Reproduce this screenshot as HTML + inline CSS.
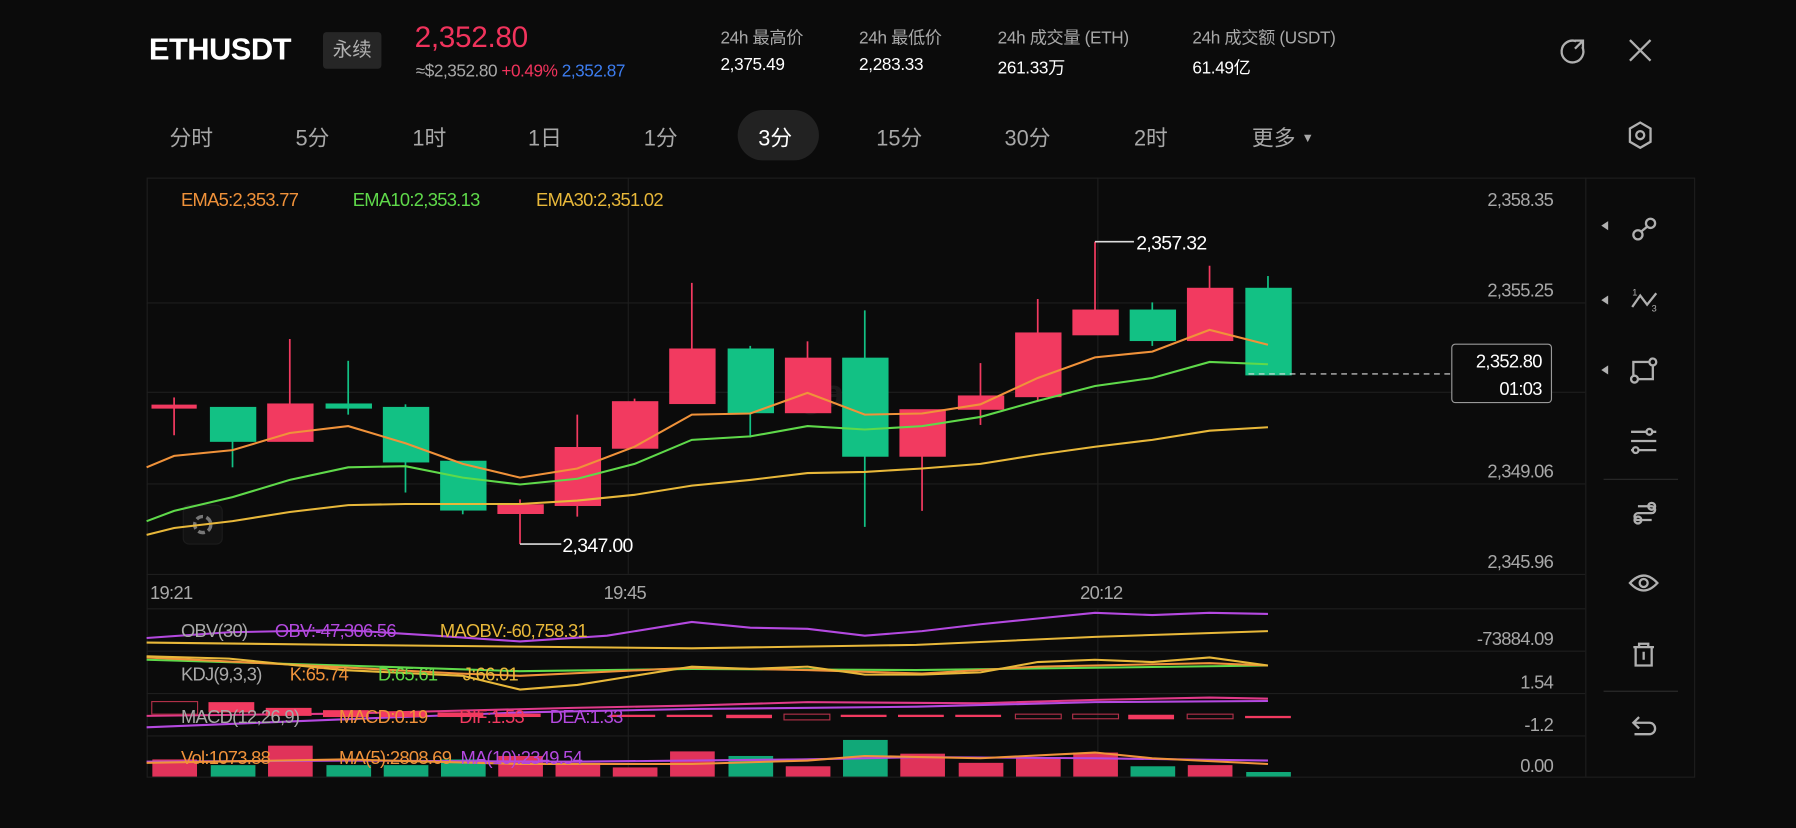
<!DOCTYPE html>
<html><head><meta charset="utf-8"><style>
html,body{margin:0;padding:0;background:#0b0b0b;width:1796px;height:828px;overflow:hidden}
#w{position:absolute;left:0;top:0;width:1568px;height:723px;transform:scale(1.14541);transform-origin:0 0;font-family:"Liberation Sans","Noto Sans CJK SC",sans-serif;color:#fff}
.a{position:absolute;white-space:nowrap}
.lb{color:#a8a8a8;font-size:15px;letter-spacing:-0.3px}
.v{color:#fff;font-size:15px;letter-spacing:-0.3px}
.tab{position:absolute;top:106px;font-size:19px;color:#a8a8a8}
svg text{font-family:"Liberation Sans","Noto Sans CJK SC",sans-serif;letter-spacing:-0.6px}
</style></head><body><div id="w">
<div class="a" style="left:130px;top:28px;font-size:27px;font-weight:bold;letter-spacing:-0.5px">ETHUSDT</div>
<div class="a" style="left:282px;top:28px;width:51px;height:32px;background:#262626;border-radius:3px;color:#b0b0b0;font-size:17px;line-height:32px;text-align:center">永续</div>
<div class="a" style="left:362px;top:17px;font-size:26px;color:#f0335c;letter-spacing:-0.3px">2,352.80</div>
<div class="a" style="left:363px;top:54px;font-size:15px;color:#a8a8a8;letter-spacing:-0.4px">≈$2,352.80 <span style="color:#f0335c">+0.49%</span> <span style="color:#3d7df0">2,352.87</span></div>
<div class="a lb" style="left:629px;top:22px">24h 最高价</div><div class="a v" style="left:629px;top:48px">2,375.49</div>
<div class="a lb" style="left:750px;top:22px">24h 最低价</div><div class="a v" style="left:750px;top:48px">2,283.33</div>
<div class="a lb" style="left:871px;top:22px">24h 成交量 (ETH)</div><div class="a v" style="left:871px;top:48px">261.33万</div>
<div class="a lb" style="left:1041px;top:22px">24h 成交额 (USDT)</div><div class="a v" style="left:1041px;top:48px">61.49亿</div>
<svg class="a" style="left:1360px;top:32px" width="90" height="26" viewBox="0 0 90 26"><path d="M16 4 A9.5 9.5 0 1 0 21.5 9" fill="none" stroke="#b0b0b0" stroke-width="2"/><path d="M15 3.5 L22 3.5 L22 10.5 M22 3.5 L15 10.5" fill="none" stroke="#b0b0b0" stroke-width="2"/><path d="M63 3 L81 21 M81 3 L63 21" stroke="#b0b0b0" stroke-width="2"/></svg>
<div class="a" style="left:644px;top:96px;width:71px;height:44px;border-radius:22px;background:#222"></div>
<div class="tab" style="left:148px">分时</div><div class="tab" style="left:258px">5分</div><div class="tab" style="left:360px">1时</div><div class="tab" style="left:461px">1日</div><div class="tab" style="left:562px">1分</div><div class="tab" style="left:662px;color:#fff">3分</div><div class="tab" style="left:765px">15分</div><div class="tab" style="left:877px">30分</div><div class="tab" style="left:990px">2时</div><div class="tab" style="left:1093px">更多 <span style="font-size:11px;position:relative;top:-3px">▼</span></div>
<svg class="a" style="left:1420px;top:105px" width="24" height="26" viewBox="0 0 24 26"><path d="M12 2 L21 7.2 L21 18.8 L12 24 L3 18.8 L3 7.2 Z" fill="none" stroke="#b0b0b0" stroke-width="2"/><circle cx="12" cy="13" r="3.5" fill="none" stroke="#b0b0b0" stroke-width="2"/></svg>

<svg class="a" style="left:0;top:0" width="1568" height="723" viewBox="0 0 1568 723">
<g stroke="#1e1e1e" stroke-width="1" fill="none">
<rect x="128.5" y="155.5" width="1351" height="523"/>
<line x1="1384.5" y1="155" x2="1384.5" y2="678"/>
<line x1="128" y1="264.5" x2="1384" y2="264.5"/><line x1="128" y1="342.5" x2="1384" y2="342.5"/><line x1="128" y1="422.5" x2="1384" y2="422.5"/><line x1="128" y1="501.5" x2="1384" y2="501.5"/>
<line x1="128" y1="531.5" x2="1384" y2="531.5"/><line x1="128" y1="568.5" x2="1384" y2="568.5"/><line x1="128" y1="605.5" x2="1384" y2="605.5"/><line x1="128" y1="642.5" x2="1384" y2="642.5"/>
<line x1="548.5" y1="155" x2="548.5" y2="501"/><line x1="958.5" y1="155" x2="958.5" y2="501"/>
<line x1="548.5" y1="531" x2="548.5" y2="678"/><line x1="958.5" y1="531" x2="958.5" y2="678"/>
<line x1="1400" y1="418.5" x2="1465" y2="418.5" stroke="#2a2a2a"/><line x1="1400" y1="603.5" x2="1465" y2="603.5" stroke="#2a2a2a"/>
</g>
<g font-size="16" fill="#a8a8a8" text-anchor="end">
<text x="1356" y="180">2,358.35</text><text x="1356" y="259">2,355.25</text><text x="1356" y="417">2,349.06</text><text x="1356" y="496">2,345.96</text>
<text x="1356" y="563">-73884.09</text><text x="1356" y="601">1.54</text><text x="1356" y="638">-1.2</text><text x="1356" y="674">0.00</text>
</g>
<g font-size="16" fill="#a8a8a8"><text x="131" y="523">19:21</text><text x="527" y="523">19:45</text><text x="943" y="523">20:12</text></g>
<g font-size="16"><text x="158" y="180" fill="#f0923a">EMA5:2,353.77</text><text x="308" y="180" fill="#5fd94a">EMA10:2,353.13</text><text x="468" y="180" fill="#e8b83a">EMA30:2,351.02</text></g>
<text x="698" y="355" font-size="34" font-weight="bold" fill="#1a1a1a">gate</text>
<rect x="160" y="441" width="34" height="34" rx="5" fill="#121212" stroke="#1c1c1c"/><circle cx="177" cy="458" r="7" fill="none" stroke="#777" stroke-width="3" stroke-dasharray="6 3"/>
<g stroke-width="1.5">
<g stroke="#f23a60" fill="#f23a60">
<line x1="152" y1="347" x2="152" y2="380"/><rect x="133" y="354" width="38" height="2"/>
<line x1="253" y1="296" x2="253" y2="385"/><rect x="234" y="353" width="39" height="32"/>
<line x1="454" y1="436" x2="454" y2="475"/><rect x="435" y="441" width="39" height="7"/>
<line x1="504" y1="362" x2="504" y2="451"/><rect x="485" y="391" width="39" height="50"/>
<line x1="554" y1="348" x2="554" y2="391"/><rect x="535" y="351" width="39" height="40"/>
<line x1="604" y1="247" x2="604" y2="352"/><rect x="585" y="305" width="39" height="47"/>
<line x1="705" y1="298" x2="705" y2="360"/><rect x="686" y="313" width="39" height="47"/>
<line x1="805" y1="358" x2="805" y2="446"/><rect x="786" y="358" width="39" height="40"/>
<line x1="856" y1="317" x2="856" y2="371"/><rect x="837" y="346" width="39" height="11"/>
<line x1="906" y1="261" x2="906" y2="350"/><rect x="887" y="291" width="39" height="55"/>
<line x1="956" y1="211" x2="956" y2="292"/><rect x="937" y="271" width="39" height="21"/>
<line x1="1056" y1="232" x2="1056" y2="297"/><rect x="1037" y="252" width="39" height="45"/>
</g>
<g stroke="#12c184" fill="#12c184">
<line x1="203" y1="356" x2="203" y2="408"/><rect x="184" y="356" width="39" height="29"/>
<line x1="304" y1="315" x2="304" y2="362"/><rect x="285" y="353" width="39" height="3"/>
<line x1="354" y1="353" x2="354" y2="430"/><rect x="335" y="356" width="39" height="47"/>
<line x1="404" y1="403" x2="404" y2="449"/><rect x="385" y="403" width="39" height="42"/>
<line x1="655" y1="302" x2="655" y2="382"/><rect x="636" y="305" width="39" height="55"/>
<line x1="755" y1="271" x2="755" y2="460"/><rect x="736" y="313" width="39" height="85"/>
<line x1="1006" y1="264" x2="1006" y2="302"/><rect x="987" y="271" width="39" height="26"/>
<line x1="1107" y1="241" x2="1107" y2="327"/><rect x="1088" y="252" width="39" height="75"/>
</g></g>
<g fill="none" stroke-width="1.8">
<polyline stroke="#e8b83a" points="128,467 152,461 203,455 253,447 304,441 354,440 404,440 454,440 504,437 554,432 604,424 655,419 705,413 755,412 805,409 856,405 906,397 956,390 1006,384 1056,376 1107,373"/>
<polyline stroke="#5fd94a" points="128,455 152,446 203,434 253,419 304,408 354,407 404,417 454,423 504,418 554,405 604,384 655,381 705,372 755,375 805,372 856,364 906,350 956,337 1006,330 1056,316 1107,318"/>
<polyline stroke="#f0923a" points="128,408 152,398 203,393 253,378 304,372 354,387 404,405 454,417 504,409 554,390 604,362 655,361 705,343 755,362 805,361 856,353 906,330 956,312 1006,307 1056,288 1107,301"/>
</g>
<polyline points="454,475 490,475" stroke="#ddd" stroke-width="1.5" fill="none"/><text x="491" y="482" font-size="17" fill="#fff">2,347.00</text>
<polyline points="956,211 990,211" stroke="#ddd" stroke-width="1.5" fill="none"/><text x="992" y="218" font-size="17" fill="#fff">2,357.32</text>
<line x1="1090" y1="326.5" x2="1267" y2="326.5" stroke="#ddd" stroke-dasharray="5 4"/>
<text x="1352" y="338" font-size="16" fill="#2a2a2a" text-anchor="end">2,352.16</text>
<rect x="1267.5" y="300.5" width="87" height="51" rx="3" fill="#0b0b0b" stroke="#999"/>
<text x="1346" y="321" font-size="16" fill="#fff" text-anchor="end">2,352.80</text><text x="1346" y="345" font-size="16" fill="#fff" text-anchor="end">01:03</text>
<g fill="none" stroke-width="1.8">
<polyline stroke="#b449e0" points="128,557 200,552 300,550 380,555 454,560 530,555 604,543 655,548 705,549 755,555 805,551 856,545 906,540 956,535 1006,537 1056,535 1107,536"/>
<polyline stroke="#e8b83a" points="128,561 300,563 604,566 800,563 956,556 1107,551"/>
<polyline stroke="#5fd94a" points="128,576 300,581 454,586 604,584 800,585 1107,581"/>
<polyline stroke="#f0923a" points="128,574 250,580 400,588 454,590 604,583 705,585 805,588 906,582 1056,579 1107,581"/>
<polyline stroke="#e8b83a" points="128,573 200,575 300,585 404,590 454,602 504,598 554,590 604,582 655,584 705,582 755,589 805,589 856,587 906,578 956,576 1006,578 1056,574 1107,581"/>
<polyline stroke="#e03a8a" points="128,625 300,623 500,618 604,616 705,613 856,614 956,611 1056,609 1107,610"/>
<polyline stroke="#b449e0" points="128,635 300,628 454,622 604,619 800,617 956,613 1107,612"/>
</g>
<g fill="#f23a60">
<rect x="182" y="613" width="40" height="9" /><rect x="232" y="618" width="40" height="7"/><rect x="282" y="620" width="40" height="6"/><rect x="332" y="621" width="40" height="5"/><rect x="382" y="622" width="40" height="4"/><rect x="432" y="623" width="40" height="3"/>
<rect x="532" y="624" width="40" height="2"/><rect x="582" y="624" width="40" height="2"/><rect x="634" y="624" width="40" height="3"/><rect x="734" y="624" width="40" height="2"/><rect x="784" y="624" width="40" height="2"/><rect x="834" y="624" width="40" height="2"/><rect x="985" y="624" width="40" height="4"/><rect x="1087" y="625" width="40" height="2"/>
</g>
<g fill="none" stroke="#b03048" stroke-width="1"><rect x="132.5" y="612.5" width="40" height="11"/><rect x="684.5" y="623.5" width="40" height="5"/><rect x="886.5" y="623.5" width="40" height="4"/><rect x="936.5" y="623.5" width="40" height="4"/><rect x="1036.5" y="623.5" width="40" height="4"/></g>
<g fill="#e0335a"><rect x="133" y="663" width="39" height="15"/><rect x="234" y="651" width="39" height="27"/><rect x="435" y="660" width="39" height="18"/><rect x="485" y="666" width="39" height="12"/><rect x="535" y="670" width="39" height="8"/><rect x="585" y="656" width="39" height="22"/><rect x="686" y="669" width="39" height="9"/><rect x="786" y="658" width="39" height="20"/><rect x="837" y="666" width="39" height="12"/><rect x="887" y="661" width="39" height="17"/><rect x="937" y="657" width="39" height="21"/><rect x="1037" y="668" width="39" height="10"/></g>
<g fill="#11a878"><rect x="184" y="668" width="39" height="10"/><rect x="285" y="668" width="39" height="10"/><rect x="335" y="668" width="39" height="10"/><rect x="385" y="663" width="39" height="15"/><rect x="636" y="660" width="39" height="18"/><rect x="736" y="646" width="39" height="32"/><rect x="987" y="669" width="39" height="9"/><rect x="1088" y="674" width="39" height="4"/></g>
<g fill="none" stroke-width="1.8">
<polyline stroke="#b449e0" points="128,665 300,664 500,665 604,664 700,663 805,661 956,662 1107,664"/>
<polyline stroke="#f0923a" points="128,666 300,663 454,667 604,667 705,664 755,660 856,662 956,657 1006,662 1107,667"/>
</g>
<g font-size="16">
<text x="158" y="556" fill="#a8a8a8">OBV(30)</text><text x="240" y="556" fill="#b449e0">OBV:-47,306.56</text><text x="384" y="556" fill="#e8b83a">MAOBV:-60,758.31</text>
<text x="158" y="594" fill="#a8a8a8">KDJ(9,3,3)</text><text x="253" y="594" fill="#f0923a">K:65.74</text><text x="330" y="594" fill="#5fd94a">D:65.61</text><text x="404" y="594" fill="#e8b83a">J:66.01</text>
<text x="158" y="631" fill="#a8a8a8">MACD(12,26,9)</text><text x="296" y="631" fill="#f0923a">MACD:0.19</text><text x="401" y="631" fill="#f23a60">DIF:1.53</text><text x="480" y="631" fill="#b449e0">DEA:1.33</text>
<text x="158" y="667" fill="#f0923a">Vol:1073.88</text><text x="296" y="667" fill="#f0923a">MA(5):2808.69</text><text x="402" y="667" fill="#b449e0">MA(10):2349.54</text>
</g>
<g fill="#b0b0b0"><path d="M1398 197 l6 -4 v8z"/><path d="M1398 262 l6 -4 v8z"/><path d="M1398 323 l6 -4 v8z"/></g>
<g fill="none" stroke="#b0b0b0" stroke-width="2">
<circle cx="1430" cy="205" r="4"/><circle cx="1441" cy="195" r="4"/><line x1="1433" y1="202" x2="1438" y2="198"/>
<path d="M1425 268 L1432 258 L1438 266 L1446 256"/>
<rect x="1426" y="316" width="17" height="15"/><circle cx="1427" cy="331" r="3" fill="#0b0b0b"/><circle cx="1443" cy="316" r="3" fill="#0b0b0b"/>
<line x1="1424" y1="377" x2="1446" y2="377"/><line x1="1424" y1="385" x2="1446" y2="385"/><line x1="1424" y1="393" x2="1446" y2="393"/>
<circle cx="1440" cy="377" r="2.5" fill="#0b0b0b"/><circle cx="1428" cy="393" r="2.5" fill="#0b0b0b"/>
<path d="M1430 442 H1442 A3 3 0 0 1 1442 448 H1430 A3 3 0 0 0 1430 454 H1442"/><circle cx="1442" cy="442" r="3"/><circle cx="1430" cy="454" r="3"/>
<path d="M1423 509 Q1435 496 1447 509 Q1435 522 1423 509Z"/><circle cx="1435" cy="509" r="3.5"/>
<path d="M1426 565 H1444 M1431 565 V562 H1439 V565 M1428 565 V581 H1442 V565 M1435 569 V576"/>
<path d="M1431 626 L1426 631 L1431 636 M1426 631 H1440 A5 5 0 0 1 1440 641 H1427"/>
</g>
<g font-size="8" fill="#b0b0b0"><text x="1425" y="258">1</text><text x="1442" y="272">3</text></g>
</svg>
</div></body></html>
